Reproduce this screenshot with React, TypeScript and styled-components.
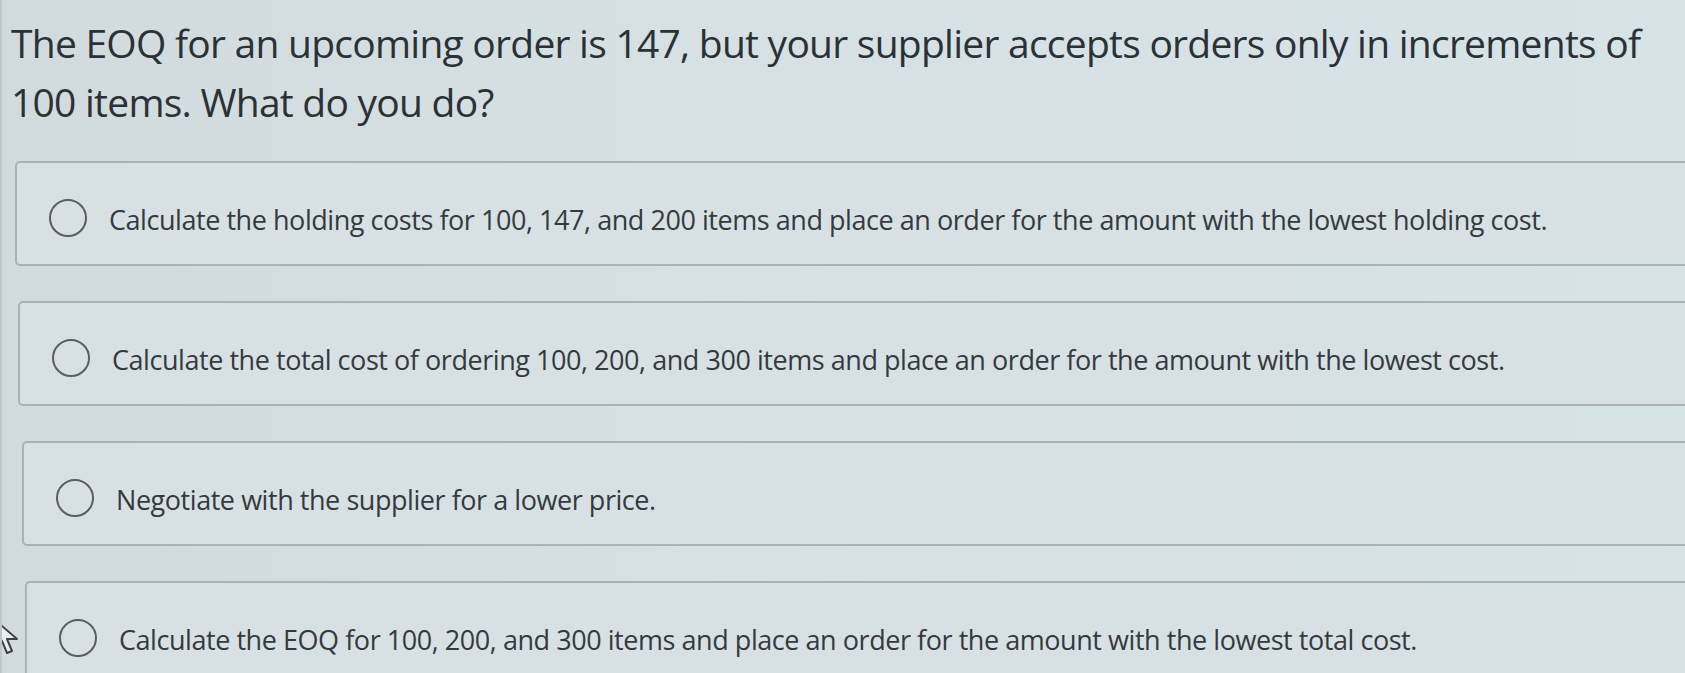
import React from "react";
import styled, { createGlobalStyle } from "styled-components";

const GlobalStyle = createGlobalStyle`
  html, body {
    margin: 0;
    padding: 0;
    background: #d4dee1;
    overflow: hidden;
  }
  #root {
    width: 1685px;
    height: 673px;
  }
`;

const Screen = styled.div`
  position: relative;
  width: 1685px;
  height: 673px;
  overflow: hidden;
  box-sizing: border-box;
  padding: 13px 0 0 9px;
  background: linear-gradient(90deg, #d1dbde 0%, #d6e1e4 45%, #d6e3e7 100%);
  border-left: 2px solid #bcc7ca;
  font-family: "Open Sans", "Noto Sans", sans-serif;
`;

const Question = styled.h1`
  margin: 0;
  font-size: 39px;
  line-height: 59px;
  font-weight: 400;
  color: #2b3135;
  letter-spacing: -0.75px;
  white-space: nowrap;
`;

const OptionList = styled.div`
  display: flex;
  flex-direction: column;
  gap: 35px;
  margin-top: 30px;
  margin-left: 4px;
  margin-right: -40px;
`;

const OptionBox = styled.label<{ $indent: number }>`
  display: flex;
  align-items: center;
  gap: 22px;
  height: 105px;
  box-sizing: border-box;
  margin-left: ${(p) => p.$indent}px;
  padding: 12px 0 0 32px;
  border: 2px solid #a8b3b6;
  border-radius: 5px;
  background: #d7e1e4;
  cursor: pointer;
`;

const Radio = styled.span`
  flex: none;
  width: 34px;
  height: 34px;
  border-radius: 50%;
  border: 2px solid #585e61;
  margin-top: -4px;
`;

const OptionText = styled.span`
  font-size: 27px;
  letter-spacing: -0.45px;
  color: #343a3e;
  white-space: nowrap;
`;

const Cursor = styled.svg`
  position: absolute;
  left: -9px;
  top: 618px;
  width: 28px;
  height: 40px;
`;

const options = [
  {
    text: "Calculate the holding costs for 100, 147, and 200 items and place an order for the amount with the lowest holding cost.",
    indent: 0,
  },
  {
    text: "Calculate the total cost of ordering 100, 200, and 300 items and place an order for the amount with the lowest cost.",
    indent: 3,
  },
  {
    text: "Negotiate with the supplier for a lower price.",
    indent: 7,
  },
  {
    text: "Calculate the EOQ for 100, 200, and 300 items and place an order for the amount with the lowest total cost.",
    indent: 10,
  },
];

export default function App() {
  return (
    <>
      <GlobalStyle />
      <Screen>
        <Question>
          The EOQ for an upcoming order is 147, but your supplier accepts orders only in increments of
          <br />
          100 items. What do you do?
        </Question>
        <OptionList>
          {options.map((o) => (
            <OptionBox key={o.text} $indent={o.indent}>
              <Radio />
              <OptionText>{o.text}</OptionText>
            </OptionBox>
          ))}
        </OptionList>
        <Cursor viewBox="0 0 28 40">
          <path
            d="M2 2 L2 30 L9 23 L14 35 L19 33 L14 21 L24 21 Z"
            fill="#e9eef0"
            stroke="#3d4346"
            strokeWidth="2"
            strokeLinejoin="round"
          />
        </Cursor>
      </Screen>
    </>
  );
}
